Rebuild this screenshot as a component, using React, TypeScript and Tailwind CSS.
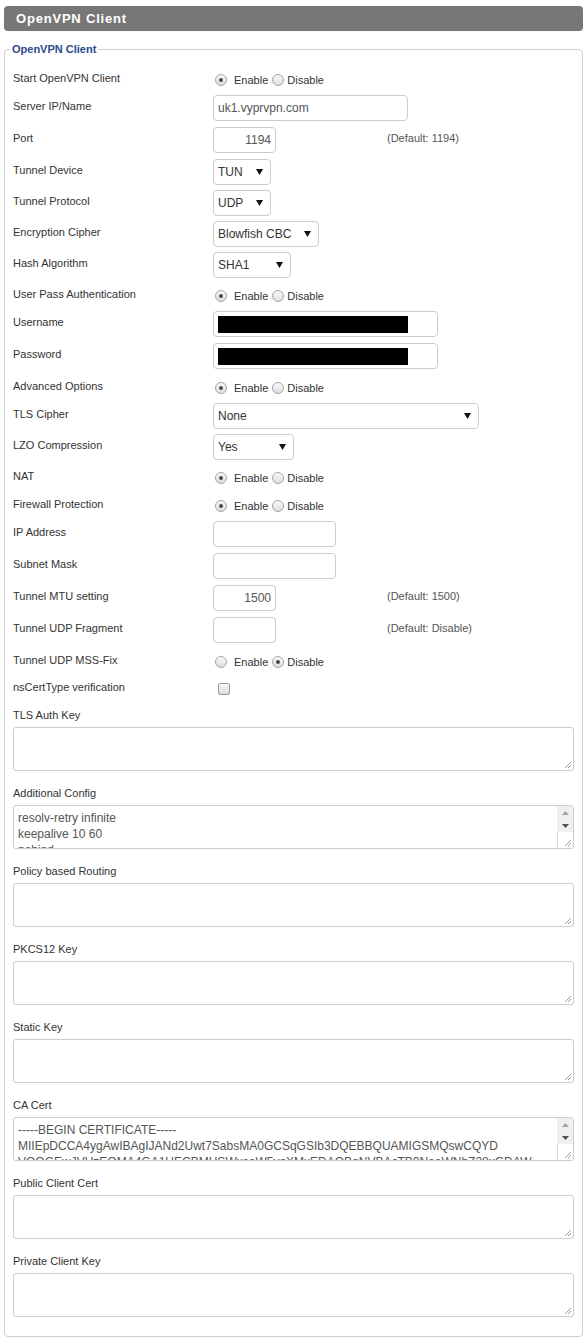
import React from "react";

type Kind =
  | { t: "radio"; on: boolean }
  | { t: "input"; w: string; value?: string; right?: boolean; redact?: boolean }
  | { t: "select"; w: string; value: string }
  | { t: "check" };

interface RowDef {
  label: string;
  mb: string;
  kind: Kind;
  hint?: string;
}

const rows: RowDef[] = [
  { label: "Start OpenVPN Client", mb: "mb-[2px]", kind: { t: "radio", on: true } },
  { label: "Server IP/Name", mb: "mb-[6px]", kind: { t: "input", w: "w-[195px]", value: "uk1.vyprvpn.com" } },
  { label: "Port", mb: "mb-[6px]", kind: { t: "input", w: "w-[63px]", value: "1194", right: true }, hint: "(Default: 1194)" },
  { label: "Tunnel Device", mb: "mb-[5px]", kind: { t: "select", w: "w-[58px]", value: "TUN" } },
  { label: "Tunnel Protocol", mb: "mb-[5px]", kind: { t: "select", w: "w-[58px]", value: "UDP" } },
  { label: "Encryption Cipher", mb: "mb-[5px]", kind: { t: "select", w: "w-[106px]", value: "Blowfish CBC" } },
  { label: "Hash Algorithm", mb: "mb-[5px]", kind: { t: "select", w: "w-[78px]", value: "SHA1" } },
  { label: "User Pass Authentication", mb: "mb-[2px]", kind: { t: "radio", on: true } },
  { label: "Username", mb: "mb-[6px]", kind: { t: "input", w: "w-[225px]", redact: true } },
  { label: "Password", mb: "mb-[6px]", kind: { t: "input", w: "w-[225px]", redact: true } },
  { label: "Advanced Options", mb: "mb-[2px]", kind: { t: "radio", on: true } },
  { label: "TLS Cipher", mb: "mb-[5px]", kind: { t: "select", w: "w-[266px]", value: "None" } },
  { label: "LZO Compression", mb: "mb-[5px]", kind: { t: "select", w: "w-[81px]", value: "Yes" } },
  { label: "NAT", mb: "mb-[2px]", kind: { t: "radio", on: true } },
  { label: "Firewall Protection", mb: "mb-[2px]", kind: { t: "radio", on: true } },
  { label: "IP Address", mb: "mb-[6px]", kind: { t: "input", w: "w-[123px]" } },
  { label: "Subnet Mask", mb: "mb-[6px]", kind: { t: "input", w: "w-[123px]" } },
  { label: "Tunnel MTU setting", mb: "mb-[6px]", kind: { t: "input", w: "w-[63px]", value: "1500", right: true }, hint: "(Default: 1500)" },
  { label: "Tunnel UDP Fragment", mb: "mb-[6px]", kind: { t: "input", w: "w-[63px]" }, hint: "(Default: Disable)" },
  { label: "Tunnel UDP MSS-Fix", mb: "mb-[1px]", kind: { t: "radio", on: false } },
  { label: "nsCertType verification", mb: "mb-0", kind: { t: "check" } },
];

const areas: { label: string; lines?: string[]; scroll?: boolean }[] = [
  { label: "TLS Auth Key" },
  { label: "Additional Config", lines: ["resolv-retry infinite", "keepalive 10 60", "nobind"], scroll: true },
  { label: "Policy based Routing" },
  { label: "PKCS12 Key" },
  { label: "Static Key" },
  {
    label: "CA Cert",
    lines: [
      "-----BEGIN CERTIFICATE-----",
      "MIIEpDCCA4ygAwIBAgIJANd2Uwt7SabsMA0GCSqGSIb3DQEBBQUAMIGSMQswCQYD",
      "VQQGEwJVUzEQMA4GA1UECBMHSWxsaW5vaXMxEDAOBgNVBAcTB0NoaWNhZ28xGDAW",
    ],
    scroll: true,
  },
  { label: "Public Client Cert" },
  { label: "Private Client Key" },
];

function Dot({ on }: { on: boolean }) {
  return (
    <span className="w-[12px] h-[12px] rounded-full border border-[#a4a4a4] bg-gradient-to-b from-[#fafafa] to-[#dedede] flex items-center justify-center shrink-0">
      {on && <span className="w-[4px] h-[4px] rounded-full bg-[#4a4a4a]"></span>}
    </span>
  );
}

function Arrow({ className = "" }: { className?: string }) {
  return (
    <svg className={className} width="7" height="6" viewBox="0 0 7 6">
      <path d="M0 0h7L3.5 6z" fill="currentColor" />
    </svg>
  );
}

function Grip() {
  return (
    <svg className="absolute right-[1px] bottom-[1px]" width="8" height="8" viewBox="0 0 8 8">
      <path d="M7 1L1 7M7 4L4 7" stroke="#9a9a9a" strokeWidth="1" />
    </svg>
  );
}

function Control({ kind }: { kind: Kind }) {
  if (kind.t === "radio") {
    return (
      <div className="flex items-center ml-[2px] text-[11px] text-[#333]">
        <Dot on={kind.on} />
        <span className="ml-[7px]">Enable</span>
        <span className="ml-[4px]"><Dot on={!kind.on} /></span>
        <span className="ml-[3px]">Disable</span>
      </div>
    );
  }
  if (kind.t === "check") {
    return (
      <span className="ml-[5px] w-[12px] h-[12px] rounded-[2px] border border-[#9c9c9c] bg-gradient-to-b from-[#f6f6f6] to-[#dcdcdc]"></span>
    );
  }
  if (kind.t === "select") {
    return (
      <div className={`${kind.w} shrink-0 h-[26px] border border-[#ccc] rounded-[4px] bg-white flex items-center justify-between pl-[4px] pr-[7px] text-[12px] text-[#333]`}>
        <span>{kind.value}</span>
        <Arrow className="text-[#111]" />
      </div>
    );
  }
  return (
    <div className={`${kind.w} shrink-0 h-[26px] border border-[#ccc] rounded-[4px] bg-white flex items-center px-[4px] text-[12px] text-[#555] ${kind.right ? "justify-end" : ""}`}>
      {kind.redact ? <span className="w-[190px] h-[17px] bg-black"></span> : kind.value}
    </div>
  );
}

export default function App() {
  return (
    <div className="w-[587px] bg-white pt-[6px] pb-[6px] font-['Liberation_Sans',Arial,sans-serif]">
      {/* Title bar */}
      <div className="mx-[4px] h-[25px] rounded-[4px] bg-[#787776] flex items-center px-[12px]">
        <span className="text-white font-bold text-[13px] tracking-[0.8px]">OpenVPN Client</span>
      </div>

      <fieldset className="mx-[4px] mt-[12px] border border-[#cfcfcf] rounded-[4px] px-[8px] pt-[11px] pb-[19px]">
        <legend className="-ml-[3px] px-[2px] text-[11px] leading-[13px] font-bold text-[#2b4a8b]">OpenVPN Client</legend>

        {rows.map((r) => (
          <div key={r.label} className={`flex h-[26px] items-center ${r.mb}`}>
            <span className="w-[200px] shrink-0 text-[11px] text-[#333] mb-[3px]">{r.label}</span>
            <div className="min-w-[174px] shrink-0 flex items-center">
              <Control kind={r.kind} />
            </div>
            {r.hint && <span className="text-[11px] text-[#555] mb-[3px]">{r.hint}</span>}
          </div>
        ))}

        <div className="mt-[7px]">
          {areas.map((a, i) => (
            <div key={a.label} className={i < areas.length - 1 ? "mb-[16px]" : ""}>
              <div className="text-[11px] leading-[13px] text-[#333] mb-[5px]">{a.label}</div>
              <div className="relative w-[561px] h-[44px] border border-[#ccc] rounded-[3px] bg-white overflow-hidden">
                {a.lines && (
                  <div className="pl-[4px] pt-[4px] text-[12px] leading-[16px] text-[#555] whitespace-nowrap">
                    {a.lines.map((l) => (
                      <div key={l}>{l}</div>
                    ))}
                  </div>
                )}
                {a.scroll && (
                  <div className="absolute right-0 top-0 bottom-0 w-[16px] flex flex-col bg-white">
                    <div className="h-[13px] bg-[#f0f0f0] flex items-center justify-center">
                      <svg width="7" height="4" viewBox="0 0 7 4"><path d="M0 4h7L3.5 0z" fill="#a3a3a3" /></svg>
                    </div>
                    <div className="h-[13px] bg-[#f0f0f0] flex items-center justify-center">
                      <svg width="7" height="4" viewBox="0 0 7 4"><path d="M0 0h7L3.5 4z" fill="#505050" /></svg>
                    </div>
                    <div className="flex-1 border-l border-[#dcdcdc]"></div>
                  </div>
                )}
                <Grip />
              </div>
            </div>
          ))}
        </div>
      </fieldset>
    </div>
  );
}
